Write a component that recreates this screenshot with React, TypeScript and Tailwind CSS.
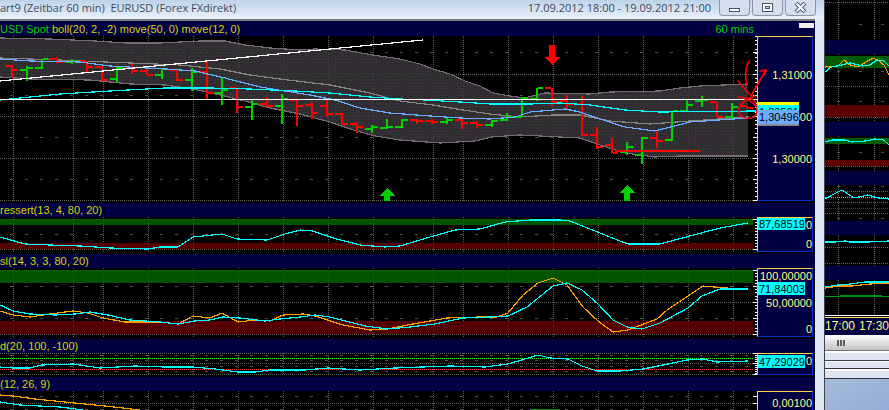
import React from 'react';

type Bar = [high: number, low: number, open: number, close: number, up: number];

interface PlotProps {
  top: number;
  height: number;
  rows?: number[];
  dashes?: number[];
  children?: React.ReactNode;
}

interface PanelProps {
  title: React.ReactNode;
  right?: React.ReactNode;
  className?: string;
}

// one bar every 15 units, first one at x = 11
const BARS: Bar[] = [
  [65, 78, 66, 70, 0], [66, 81, 70, 68, 1], [59, 69, 68, 59, 1], [57, 63, 59, 62, 0], [59, 64, 62, 61, 1],
  [61, 72, 61, 67, 0], [66, 81, 67, 80, 0], [67, 83, 79, 68, 1], [64, 74, 68, 71, 0], [69, 75, 71, 75, 0],
  [69, 79, 75, 69, 1], [69, 81, 70, 80, 0], [68, 91, 80, 72, 1], [61, 99, 72, 93, 0], [77, 105, 93, 90, 1],
  [88, 113, 88, 107, 0], [100, 120, 107, 104, 1], [97, 107, 104, 106, 0], [94, 124, 106, 99, 1], [100, 126, 100, 106, 0],
  [102, 119, 105, 113, 0], [99, 117, 106, 114, 0], [113, 125, 114, 124, 0], [122, 133, 124, 127, 0], [125, 133, 129, 127, 1],
  [119, 129, 128, 127, 1], [119, 128, 127, 120, 1], [119, 124, 120, 121, 0], [119, 124, 121, 122, 0], [118, 124, 122, 120, 1],
  [118, 129, 120, 123, 0], [121, 128, 123, 125, 0], [120, 127, 125, 121, 1], [113, 121, 120, 117, 1], [97, 117, 117, 98, 1],
  [88, 101, 99, 88, 1], [88, 106, 88, 102, 0], [95, 110, 101, 104, 0], [96, 136, 104, 135, 0], [127, 149, 135, 147, 0],
  [138, 153, 145, 153, 0], [142, 155, 152, 147, 1], [137, 164, 155, 138, 1], [131, 148, 138, 141, 0], [111, 141, 140, 111, 1],
  [99, 112, 111, 105, 1], [96, 107, 101, 100, 1], [102, 117, 102, 117, 0], [103, 118, 117, 107, 1], [106, 108, 106, 108, 0],
];

const COLUMNS = [13, 73, 103, 148, 193, 238, 283, 328, 373, 433, 463, 508, 553, 598, 643, 688, 733];

const UPPER = '0,38 50,39 95,41 125,43 160,43 200,41 225,41 245,45 270,48 300,50 315,49 345,50 373,55 400,59 420,64 433,69 450,74 465,81 480,86 493,93 510,96 525,98 545,93 590,94 610,92 660,91 680,88 700,86 748,84';
const LOWER = '748,156 680,156 655,157 625,153 600,145 580,138 560,137 520,135 492,137 475,141 440,143 400,140 375,136 353,130 330,122 300,114 270,108 245,101 220,95 193,89 165,85 130,84 90,80 30,79 0,77';

const font = "font-['Liberation_Sans',Arial,sans-serif]";

const Line = ({ points, color }: { points: string; color: string }) => (
  <polyline points={points} fill="none" stroke={color} strokeWidth="1.2" />
);

const Plot = ({ top, height, rows = [], dashes = [], children }: PlotProps) => (
  <svg
    className="relative z-10 block h-full min-w-0 flex-1 overflow-visible"
    viewBox={`0 ${top} 757 ${height}`}
    preserveAspectRatio="none"
    shapeRendering="crispEdges"
    aria-hidden="true"
  >
    {COLUMNS.map((x) => (
      <line key={x} x1={x + 0.5} x2={x + 0.5} y1={top} y2={top + height} stroke="#5a645a" strokeDasharray="1 1" />
    ))}
    {rows.map((y) => (
      <line key={y} x1="0" x2="753" y1={y + 0.5} y2={y + 0.5} stroke="#5a645a" strokeDasharray="1 1" />
    ))}
    {dashes.map((y) => (
      <line key={y} x1="10" x2="748" y1={y + 0.5} y2={y + 0.5} stroke="#4c524c" strokeDasharray="3 12" />
    ))}
    {children}
  </svg>
);

const Ticks = ({ from, to, step, major }: { from: number; to: number; step: number; major: number[] }) => {
  const count = Math.floor((to - from) / step) + 1;
  return (
    <g stroke="#fff">
      {Array.from({ length: count }, (_, i) => Math.round(from + i * step)).map((y) => (
        <line key={y} x1="755" x2="757" y1={y + 0.5} y2={y + 0.5} />
      ))}
      {major.map((y) => (
        <line key={`m${y}`} x1="753" x2="757" y1={y + 0.5} y2={y + 0.5} />
      ))}
    </g>
  );
};

const PanelTitle = ({ title, right, className = 'mt-0.5 h-3.5' }: PanelProps) => (
  <h2 className={`flex shrink-0 items-center justify-between whitespace-nowrap bg-[#000042] text-[11px] leading-[14px] text-[#d6d600] ${className}`}>
    <span>{title}</span>
    {right}
  </h2>
);

const Axis = ({ children, className = '' }: { children: React.ReactNode; className?: string }) => (
  <div className={`relative mr-0.5 flex w-14 shrink-0 flex-col items-end overflow-hidden border border-b-[#0030d0] border-l-[#ffd040] border-r-[#0030d0] border-t-[#ffd040] bg-[#000042] text-[11px] leading-[14px] text-[#ffff80] ${className}`}>
    {children}
  </div>
);

const Marker = ({ value, className }: { value: string; className: string }) => (
  <span className={`absolute left-0 overflow-hidden pl-px text-left text-black ${className}`}>{value}</span>
);

const WindowButton = ({ label, children }: { label: string; children: React.ReactNode }) => (
  <button
    type="button"
    aria-label={label}
    className="flex h-4 w-[31px] items-center justify-center rounded-b border border-t-0 border-[#8996a8] bg-[#d3dfed]"
  >
    <svg width="13" height="11" viewBox="0 0 13 11" shapeRendering="crispEdges" fill="none" stroke="#4b5361">
      {children}
    </svg>
  </button>
);

const PriceChart = () => (
  <div className="flex h-[165px] shrink-0">
    <Plot top={36} height={165} rows={[74, 116, 158, 200]} dashes={[52, 95, 137, 179]}>
      <defs>
        <pattern id="dither" width="6" height="6" patternUnits="userSpaceOnUse">
          <rect width="6" height="6" fill="#39343a" />
          <path d="M0 0h1v1h-1z M3 3h1v1h-1z" fill="#1f3a22" />
          <path d="M3 0h1v1h-1z M0 3h1v1h-1z" fill="#22201f" />
        </pattern>
      </defs>
      <polygon points={`${UPPER} ${LOWER}`} fill="url(#dither)" fillOpacity="0.9" />
      <Line points={UPPER} color="#756a76" />
      <Line points={LOWER} color="#756a76" />
      <Line
        points="0,58 60,60 105,62 180,65 220,69 250,75 280,79 330,85 370,93 400,101 433,105 463,110 490,114 520,117 553,115 580,115 610,121 650,124 690,121 748,117"
        color="#858580"
      />
      {BARS.map(([high, low, open, close, up], i) => {
        const x = 11 + i * 15;
        const fill = up ? '#00d000' : '#ff0000';
        return (
          <g key={x} fill={fill}>
            <rect x={x} y={high} width="2" height={low - high} />
            <rect x={x - 6} y={open - 1} width="6" height="2" />
            <rect x={x + 2} y={close - 1} width="5" height="2" />
          </g>
        );
      })}
      <Line
        points="0,59 30,61 80,62 110,66 165,69 195,71 225,78 260,87 285,91 310,95 335,100 360,108 390,113 430,116 460,118 490,119 515,117 530,112 553,110 565,109 580,112 600,119 625,127 655,131 690,122 748,118"
        color="#6cacff"
      />
      <Line
        points="0,100 20,98 60,94 110,91 165,88 210,88 250,89 295,91 330,93 370,97 400,99 425,100 460,102 490,104 530,104 560,103 590,105 625,110 660,112 757,111"
        color="#00ffff"
      />
      <Line points="0,81 423,40" color="#fff" />
      <rect x="0" y="99" width="757" height="1" fill="#fff" />
      <rect x="615" y="150" width="85" height="2" fill="#f00" />
      <path d="M549 45h6v12h5l-8 8l-8 -8h5z" fill="#f00" />
      <path d="M384 201h6v-5h5l-8 -8l-8 8h5z" fill="#00d000" />
      <path d="M624 201h6v-8h5l-8 -8l-8 8h5z" fill="#00d000" />
      <Ticks from={36} to={200} step={4.2} major={[52, 74, 95, 116, 137, 158, 179, 200]} />
      {/* hand drawn annotation over the last bars */}
      <g fill="none" stroke="#f00" strokeWidth="1.6" strokeLinecap="round" shapeRendering="auto">
        <path d="M749 61C745 68 745 77 747 85" />
        <path d="M738 81L751 96L766 70M760 71l6 -1l-1 5" />
        <path d="M738 97C744 97 751 101 756 106" />
        <path d="M755 96C748 98 740 103 739 109C738 117 745 119 751 118C758 117 758 108 755 102C753 99 749 98 745 99" />
      </g>
    </Plot>
    <Axis className="gap-7 pt-[31px]">
      <span>1,31000</span>
      <span>1,30500</span>
      <span>1,30000</span>
      <Marker value="" className="top-[65px] h-1 w-[41px] bg-[#ffff00]" />
      <Marker value="1,30561" className="top-[68px] h-3 w-[41px] bg-[#00ffff]" />
      <Marker value="" className="top-[83px] h-1.5 w-[41px] bg-[#888]" />
      <Marker value="1,30496" className="top-[73px] h-3.5 w-[41px] bg-[#6cacff]" />
    </Axis>
  </div>
);

const MainWindow = () => (
  <section className="flex min-w-0 flex-1 flex-col">
    <header className="flex h-[19px] shrink-0 items-start justify-between bg-linear-to-b from-[#bfd2e8] to-[#eaf2fb] pr-2 font-['Open_Sans',sans-serif] text-[11px] leading-4 text-[#3c4a58]">
      <h1 className="whitespace-pre">art9 (Zeitbar 60 min)  EURUSD (Forex FXdirekt)</h1>
      <div className="flex gap-2">
        <span className="whitespace-nowrap">17.09.2012 18:00 - 19.09.2012 21:00</span>
        <div className="flex gap-0.5">
          <WindowButton label="Minimize">
            <rect x="1.5" y="6.5" width="10" height="3" fill="#fff" />
          </WindowButton>
          <WindowButton label="Restore">
            <rect x="1.5" y="1.5" width="10" height="8" fill="#fff" />
            <rect x="4.5" y="4.5" width="4" height="2" fill="#d3dfed" />
          </WindowButton>
          <WindowButton label="Close">
            <path d="M2 1L11 10M11 1L2 10" strokeWidth="4" shapeRendering="auto" />
            <path d="M2.500 1.500L10.500 9.500M10.500 1.500L2.500 9.500" stroke="#fff" strokeWidth="2" shapeRendering="auto" />
          </WindowButton>
        </div>
      </div>
    </header>
    <div className="flex min-h-0 flex-1">
      <div className={`flex min-w-0 flex-1 flex-col border-t-2 border-[#77777c] bg-black ${font}`}>
        <PanelTitle
          className="h-[15px]"
          title={
            <>
              <span className="text-[#00d000]">USD Spot</span> boll(20, 2, -2) move(50, 0) move(12, 0)
            </>
          }
          right={
            <span className="flex gap-[45px] text-[#00d000]">
              60 mins
              <span className="mr-px mt-px h-[5px] w-[15px] bg-[#f0f0f0]" />
            </span>
          }
        />
        <PriceChart />

        <PanelTitle title="ressert(13, 4, 80, 20)" />
        <div className="flex h-[35px] shrink-0">
          <Plot top={217} height={35} rows={[219, 249]} dashes={[234]}>
            <rect x="0" y="219" width="753" height="6" fill="#006400" fillOpacity="0.85" />
            <rect x="0" y="243" width="753" height="6" fill="#640000" fillOpacity="0.85" />
            <Line
              points="0,237 25,244 50,245 80,246 110,248 148,249 160,247 178,247 193,237 222,234 237,239 267,240 285,234 300,230 313,231 333,238 360,245 385,247 400,246 430,237 455,230 480,229 505,222 530,220 560,220 570,221 590,229 620,241 628,244 660,244 690,236 720,228 748,223"
              color="#00ffff"
            />
            <Ticks from={219} to={249} step={3} major={[219, 249]} />
          </Plot>
          <Axis className="justify-between">
            <span>100</span>
            <span>0</span>
            <Marker value="87,68519" className="top-0 h-3 w-[47px] bg-[#00ffff] leading-3" />
          </Axis>
        </div>

        <PanelTitle title="sl(14, 3, 3, 80, 20)" />
        <div className="flex h-[69px] shrink-0">
          <Plot top={268} height={69} rows={[270, 302, 334]} dashes={[286, 318]}>
            <rect x="0" y="270" width="753" height="13" fill="#006400" fillOpacity="0.85" />
            <rect x="0" y="321" width="753" height="13" fill="#640000" fillOpacity="0.85" />
            <Line
              points="0,311 13,315 30,317 50,314 73,311 88,313 103,318 125,322 160,322 178,324 193,316 210,318 222,313 238,322 255,320 270,321 283,315 303,314 315,316 343,325 370,330 387,329 413,324 447,318 480,317 497,317 508,313 523,295 538,283 553,278 567,285 583,307 598,321 613,332 628,330 657,319 667,310 688,296 703,286 725,288 748,289"
              color="#ffa000"
            />
            <Line
              points="0,305 13,311 30,314 55,315 75,314 90,312 108,315 130,320 160,322 178,324 195,321 210,320 223,317 240,318 265,321 280,319 300,317 315,315 330,317 345,321 365,326 387,329 410,327 435,324 463,318 490,317 508,316 527,307 553,286 567,283 582,290 598,304 613,320 627,327 642,329 660,323 688,308 702,296 720,289 748,289"
              color="#00ffff"
            />
            <Ticks from={270} to={334} step={3.2} major={[270, 286, 302, 318, 334]} />
          </Plot>
          <Axis className="justify-between">
            <span>100,00000</span>
            <span>50,00000</span>
            <span>0</span>
            <Marker value="71,84003" className="top-[13px] h-[13px] w-[47px] bg-[#00ffff]" />
          </Axis>
        </div>

        <PanelTitle title="d(20, 100, -100)" />
        <div className="flex h-[22px] shrink-0">
          <Plot top={353} height={22} rows={[353, 363, 374]} dashes={[355, 360, 366, 371]}>
            <line x1="0" x2="753" y1="358.500" y2="358.500" stroke="#30ff30" strokeDasharray="1 1" />
            <line x1="0" x2="753" y1="369.500" y2="369.500" stroke="#ff3030" strokeDasharray="1 1" />
            <Line
              points="0,367 13,368 30,368 42,365 73,364 100,368 135,366 165,367 193,367 215,369 238,372 255,372 270,370 305,370 328,368 360,370 395,368 450,366 485,367 508,364 525,359 538,355 550,358 568,359 582,366 597,371 620,371 643,369 673,363 687,360 703,359 717,362 748,361"
              color="#00ffff"
            />
            <Ticks from={353} to={374} step={2} major={[353, 363, 374]} />
          </Plot>
          <Axis>
            <span>0</span>
            <Marker value="47,29029" className="top-px h-[13px] w-[47px] bg-[#00ffff]" />
          </Axis>
        </div>

        <PanelTitle title="(12, 26, 9)" />
        <div className="flex h-[19px] shrink-0">
          <Plot top={391} height={19} rows={[403]} dashes={[396, 409]}>
            <Line points="0,395 13,396 35,399 75,403 105,406 140,410" color="#ffa000" />
            <Line points="0,402 20,405 60,407 83,410" color="#00ffff" />
            <rect x="530" y="409" width="30" height="1" fill="#009000" />
            <Ticks from={396} to={409} step={7} major={[396, 403]} />
          </Plot>
          <Axis className="border-b-0 pt-1">
            <span>0,00100</span>
          </Axis>
        </div>
      </div>
      <div className="w-[9px] shrink-0 bg-[#dfe8f7]" />
    </div>
  </section>
);

const SidePlot = ({ top, height, rows = [], dashes = [], children }: PlotProps) => (
  <svg
    className="block w-full shrink-0"
    height={height}
    viewBox={`825 ${top} 64 ${height}`}
    preserveAspectRatio="none"
    shapeRendering="crispEdges"
    aria-hidden="true"
  >
    {[838, 874].map((x) => (
      <line key={x} x1={x + 0.5} x2={x + 0.5} y1={top} y2={top + height} stroke="#5a645a" strokeDasharray="1 1" />
    ))}
    {rows.map((y) => (
      <line key={y} x1="825" x2="889" y1={y + 0.5} y2={y + 0.5} stroke="#5a645a" strokeDasharray="1 1" />
    ))}
    {dashes.map((y) => (
      <line key={y} x1="837" x2="889" y1={y + 0.5} y2={y + 0.5} stroke="#4c524c" strokeDasharray="3 19" />
    ))}
    {children}
  </svg>
);

const SideStrip = () => <div className="h-3.5 shrink-0 bg-[#000042]" />;

const SideWindow = () => (
  <aside className={`flex w-[65px] shrink-0 flex-col overflow-hidden border-l border-[#40444c] bg-black ${font}`}>
    <SidePlot top={0} height={40} rows={[2]} dashes={[24]} />
    <SideStrip />
    <SidePlot top={54} height={68} rows={[86, 117]} dashes={[71, 101]}>
      <rect x="825" y="56" width="64" height="12" fill="#005a00" />
      <rect x="825" y="105" width="64" height="12" fill="#5c0000" />
      <Line points="825,67 838,66 844,60 850,65 858,67 866,62 873,58 879,61 884,65 889,75" color="#ffa000" />
      <Line points="825,72 831,67 842,65 850,63 862,66 870,65 877,60 884,61 889,66" color="#00ffff" />
    </SidePlot>
    <SideStrip />
    <SidePlot top={136} height={35} rows={[138, 166]} dashes={[152]}>
      <rect x="825" y="138" width="64" height="6" fill="#005a00" />
      <rect x="825" y="160" width="64" height="6" fill="#5c0000" />
      <Line points="825,142 832,140 845,140 852,142 866,141 875,139 884,140 889,145" color="#00ffff" />
    </SidePlot>
    <SideStrip />
    <SidePlot top={185} height={36} rows={[191, 202, 213]} dashes={[186, 218]}>
      <line x1="825" x2="889" y1="197.500" y2="197.500" stroke="#30ff30" strokeDasharray="1 1" />
      <line x1="825" x2="889" y1="208.500" y2="208.500" stroke="#ff0000" strokeDasharray="1 1" />
      <Line points="825,199 832,195 842,190 848,194 854,198 868,195 878,198 889,199" color="#00ffff" />
    </SidePlot>
    <SideStrip />
    <SidePlot top={235} height={31} rows={[247, 263]}>
      <Line points="825,242 835,242 845,241 850,242 868,242 889,241" color="#00ffff" />
    </SidePlot>
    <SideStrip />
    <SidePlot top={280} height={35}>
      <rect x="825" y="296" width="64" height="1" fill="#00a000" />
      <rect x="840" y="295" width="42" height="2" fill="#009000" />
      <Line points="825,287 838,285 850,284 865,282 889,282" color="#00ffff" />
      <Line points="825,288 840,286 852,286 870,284 889,283" color="#ffa000" />
    </SidePlot>
    <div className="flex h-[20px] shrink-0 justify-between overflow-hidden whitespace-nowrap border-t border-white bg-[#000042] text-xs leading-[20px] text-[#ffff80] shadow-[inset_0_1px_#000,inset_0_2px_#ffe060]">
      <span>17:00</span>
      <span>17:30</span>
    </div>
    <div className="flex h-4 shrink-0 items-center border-b border-[#777] bg-linear-to-b from-white to-[#c4c4c4] pl-3">
      <svg width="9" height="6" viewBox="0 0 9 6" shapeRendering="crispEdges" aria-hidden="true">
        <path d="M0 0h2v6h-2z M3 0h2v6h-2z M6 0h2v6h-2z" fill="#606060" />
      </svg>
    </div>
    <div className="h-2.5 shrink-0 border-b border-t-2 border-b-[#40444c] border-t-white bg-[#dfe5f5]" />
    <div className="h-2 shrink-0 border-b border-t border-b-[#30343a] border-t-white bg-[#dfe5f5]" />
    <div className="h-2.5 shrink-0 border-b border-t-2 border-b-[#30343a] border-t-white bg-[#dfe5f5]" />
    <div className="flex-1 bg-linear-to-br from-[#a6bcdc] to-[#94abd4]" />
  </aside>
);

const App: React.FC = () => {
  return (
    <main className="flex h-screen overflow-hidden bg-black">
      <MainWindow />
      <SideWindow />
    </main>
  );
};

export default App;
